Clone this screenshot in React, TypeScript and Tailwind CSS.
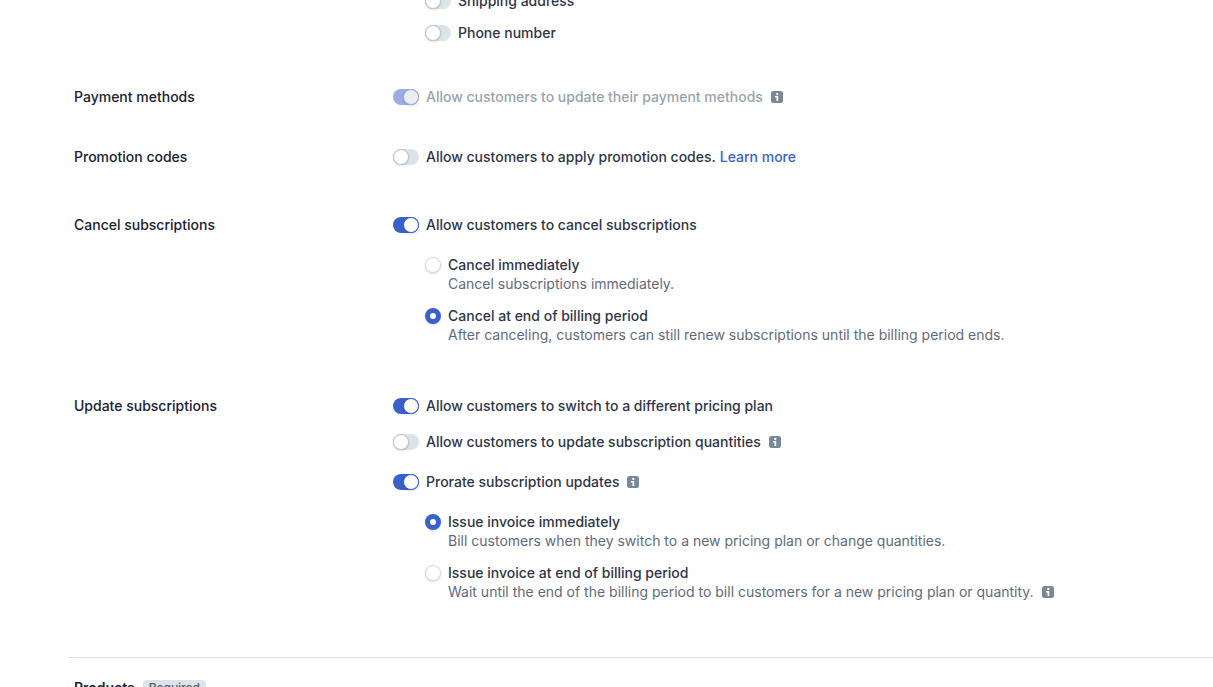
import { useId, useState } from "react";
import type { ReactNode } from "react";

function InfoIcon() {
  return (
    <button type="button" aria-label="More information" className="ml-2 inline-flex shrink-0 text-[#788896]">
      <svg viewBox="0 0 12 12" className="size-3" aria-hidden="true">
        <rect width="12" height="12" rx="2.5" fill="currentColor" />
        <circle cx="6.3" cy="3" r="1.15" fill="#fff" />
        <path d="M4 5.1h3.2V10H5.5V6.6H4z" fill="#fff" />
      </svg>
    </button>
  );
}

type ToggleProps = {
  label: string;
  on?: boolean;
  disabled?: boolean;
  children?: ReactNode;
};

function Toggle({ label, on = false, disabled = false, children }: ToggleProps) {
  const id = useId();
  const [checked, setChecked] = useState(on);
  return (
    <div className="flex items-center leading-5">
      <input
        id={id}
        type="checkbox"
        role="switch"
        checked={checked}
        disabled={disabled}
        onChange={(e) => setChecked(e.target.checked)}
        className="flex h-4 w-[26px] shrink-0 appearance-none items-center rounded-full bg-[#dce3e9] before:size-4 before:rounded-full before:border before:border-[#bcc3cb] before:bg-white before:shadow-sm checked:justify-end checked:bg-[#3a61cb] checked:before:border-[#3a61cb] disabled:checked:bg-[#9bade5] disabled:checked:before:border-[#9bade5] disabled:checked:before:bg-[#ebeef1]"
      />
      <label htmlFor={id} className={disabled ? "pl-[7px] font-medium text-[#98a3ae]" : "pl-[7px] font-medium text-[#2f3549]"}>
        {label}
      </label>
      {children}
    </div>
  );
}

type Option = { title: string; text: string; info?: boolean };

function RadioGroup({ label, options, initial }: { label: string; options: Option[]; initial: number }) {
  const name = useId();
  const [selected, setSelected] = useState(initial);
  return (
    <div role="radiogroup" aria-label={label} className="flex flex-col gap-[13px] pl-8">
      {options.map((option, i) => (
        <div key={option.title} className="flex gap-[7px]">
          <input
            id={`${name}-${i}`}
            type="radio"
            name={name}
            checked={selected === i}
            onChange={() => setSelected(i)}
            className="mt-0.5 size-4 shrink-0 appearance-none rounded-full border border-[#d5d8dc] bg-white shadow-sm checked:border-[5px] checked:border-[#3a61cb]"
          />
          <div>
            <label htmlFor={`${name}-${i}`} className="block leading-5 font-medium text-[#2f3549]">
              {option.title}
            </label>
            <p className="flex items-center leading-[18px] text-[#5f6b7c]">
              {option.text}
              {option.info && <InfoIcon />}
            </p>
          </div>
        </div>
      ))}
    </div>
  );
}

function Section({ title, children }: { title?: string; children: ReactNode }) {
  return (
    <section className="flex">
      <div className="w-[319px] shrink-0">
        {title && <h2 className="leading-5 font-medium text-[#1b2034]">{title}</h2>}
      </div>
      <div className="min-w-0 flex-1">{children}</div>
    </section>
  );
}

export default function App() {
  return (
    <div className="h-screen overflow-hidden bg-white font-['Inter',sans-serif] text-sm">
      <main className="-mt-[9px] pl-[69px]">
        <form className="pl-[5px]">
          <Section>
            <div className="flex flex-col gap-3 pl-8">
              <Toggle label="Shipping address" />
              <Toggle label="Phone number" />
            </div>
          </Section>
          <div className="mt-11">
            <Section title="Payment methods">
              <Toggle label="Allow customers to update their payment methods" on disabled>
                <InfoIcon />
              </Toggle>
            </Section>
          </div>
          <div className="mt-10">
            <Section title="Promotion codes">
              <Toggle label="Allow customers to apply promotion codes.">
                <a href="#promotion-codes" className="ml-1 font-medium text-[#3a61cb]">
                  Learn more
                </a>
              </Toggle>
            </Section>
          </div>
          <div className="mt-12">
            <Section title="Cancel subscriptions">
              <div className="flex flex-col gap-5">
                <Toggle label="Allow customers to cancel subscriptions" on />
                <RadioGroup
                  label="Cancellation mode"
                  initial={1}
                  options={[
                    { title: "Cancel immediately", text: "Cancel subscriptions immediately." },
                    {
                      title: "Cancel at end of billing period",
                      text: "After canceling, customers can still renew subscriptions until the billing period ends.",
                    },
                  ]}
                />
              </div>
            </Section>
          </div>
          <div className="mt-[52px]">
            <Section title="Update subscriptions">
              <div className="flex flex-col gap-5">
                <div className="flex flex-col gap-4">
                  <Toggle label="Allow customers to switch to a different pricing plan" on />
                  <Toggle label="Allow customers to update subscription quantities">
                    <InfoIcon />
                  </Toggle>
                </div>
                <Toggle label="Prorate subscription updates" on>
                  <InfoIcon />
                </Toggle>
                <RadioGroup
                  label="Invoice timing"
                  initial={0}
                  options={[
                    {
                      title: "Issue invoice immediately",
                      text: "Bill customers when they switch to a new pricing plan or change quantities.",
                    },
                    {
                      title: "Issue invoice at end of billing period",
                      text: "Wait until the end of the billing period to bill customers for a new pricing plan or quantity.",
                      info: true,
                    },
                  ]}
                />
              </div>
            </Section>
          </div>
        </form>
        <div className="mt-14 flex items-center gap-2 border-t border-[#dce3e9] pt-5 pl-[5px]">
          <h2 className="leading-5 font-semibold text-[#1b2034]">Products</h2>
          <span className="rounded bg-[#dce3e9] px-1.5 text-xs leading-4 font-medium text-[#4f5b6d]">Required</span>
        </div>
      </main>
    </div>
  );
}
